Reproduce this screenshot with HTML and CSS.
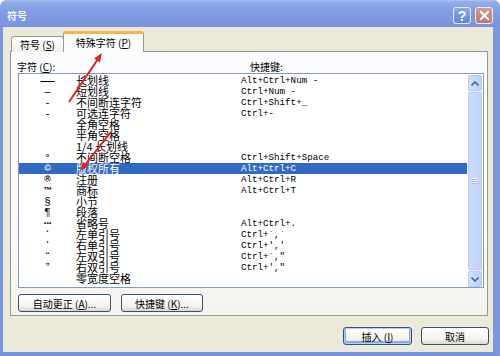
FILE: index.html
```html
<!DOCTYPE html>
<html lang="zh-CN">
<head>
    <meta charset="UTF-8">
    <meta name="viewport" content="width=device-width, initial-scale=1.0">
    <title>符号</title>
    <link rel="stylesheet" href="styles.css">
</head>
<body>
    <div class="window">
        <div class="titlebar">
            <span class="title">符号</span>
            <div class="caption-buttons">
                <span class="cap-btn help">?</span>
                <span class="cap-btn close">
                    <svg width="11" height="11" viewBox="0 0 11 11"><path d="M2 2 L9 9 M9 2 L2 9" stroke="#fff" stroke-width="2" stroke-linecap="square"/></svg>
                </span>
            </div>
        </div>
        <div class="frame">
            <div class="tabs">
                <div class="tab">符号 (<u>S</u>)</div>
                <div class="tab active">特殊字符 (<u>P</u>)</div>
            </div>
            <div class="panel">
                <div class="heads">
                    <span class="head-char">字符 (<u>C</u>):</span>
                    <span>快捷键:</span>
                </div>
                <div class="listbox">
                    <div class="rows">
                        <div class="row"><span class="sym wide">—</span><span class="name">长划线</span><span class="key">Alt+Ctrl+Num -</span></div>
                        <div class="row"><span class="sym">–</span><span class="name">短划线</span><span class="key">Ctrl+Num -</span></div>
                        <div class="row"><span class="sym">-</span><span class="name">不间断连字符</span><span class="key">Ctrl+Shift+_</span></div>
                        <div class="row"><span class="sym">-</span><span class="name">可选连字符</span><span class="key">Ctrl+-</span></div>
                        <div class="row"><span class="sym"></span><span class="name">全角空格</span><span class="key"></span></div>
                        <div class="row"><span class="sym"></span><span class="name">半角空格</span><span class="key"></span></div>
                        <div class="row"><span class="sym"></span><span class="name">1/4 长划线</span><span class="key"></span></div>
                        <div class="row"><span class="sym small">°</span><span class="name">不间断空格</span><span class="key">Ctrl+Shift+Space</span></div>
                        <div class="row selected"><span class="sym small">©</span><span class="name">版权所有</span><span class="key">Alt+Ctrl+C</span></div>
                        <div class="row"><span class="sym small">®</span><span class="name">注册</span><span class="key">Alt+Ctrl+R</span></div>
                        <div class="row"><span class="sym small">™</span><span class="name">商标</span><span class="key">Alt+Ctrl+T</span></div>
                        <div class="row"><span class="sym">§</span><span class="name">小节</span><span class="key"></span></div>
                        <div class="row"><span class="sym">¶</span><span class="name">段落</span><span class="key"></span></div>
                        <div class="row"><span class="sym dots">···</span><span class="name">省略号</span><span class="key">Alt+Ctrl+.</span></div>
                        <div class="row"><span class="sym">‘</span><span class="name">左单引号</span><span class="key">Ctrl+`,`</span></div>
                        <div class="row"><span class="sym">’</span><span class="name">右单引号</span><span class="key">Ctrl+','</span></div>
                        <div class="row"><span class="sym">“</span><span class="name">左双引号</span><span class="key">Ctrl+`,"</span></div>
                        <div class="row"><span class="sym">”</span><span class="name">右双引号</span><span class="key">Ctrl+',"</span></div>
                        <div class="row"><span class="sym"></span><span class="name">零宽度空格</span><span class="key"></span></div>
                    </div>
                    <div class="scrollbar">
                        <div class="sb-btn">
                            <svg width="8" height="5" viewBox="0 0 8 5"><path d="M0.5 4.5 L4 1 L7.5 4.5" fill="none" stroke="#4d6185" stroke-width="1.6"/></svg>
                        </div>
                        <div class="sb-thumb"><span class="grip"></span></div>
                        <div class="sb-btn">
                            <svg width="8" height="5" viewBox="0 0 8 5"><path d="M0.5 0.5 L4 4 L7.5 0.5" fill="none" stroke="#4d6185" stroke-width="1.6"/></svg>
                        </div>
                    </div>
                </div>
                <div class="panel-buttons">
                    <button class="btn btn-auto">自动更正 (<u>A</u>)...</button>
                    <button class="btn btn-keys">快捷键 (<u>K</u>)...</button>
                </div>
            </div>
            <div class="dialog-buttons">
                <button class="btn btn-default">插入 (<u>I</u>)</button>
                <button class="btn btn-cancel">取消</button>
            </div>
        </div>

        <!-- red annotation arrows -->
        <svg class="marks" width="500" height="356" viewBox="0 0 500 356">
            <line x1="69" y1="102" x2="98" y2="59" stroke="#e4201b" stroke-width="2"/>
            <polygon points="102,53 99.9,62.5 94.1,58.5" fill="#e4201b"/>
            <line x1="111" y1="132" x2="84" y2="166" stroke="#e4201b" stroke-width="2"/>
            <polygon points="80,171 88.3,166.2 82.9,161.8" fill="#e4201b"/>
        </svg>
    </div>
</body>
</html>
```

FILE: styles.css
```css
body {
    margin: 0;
    width: 500px;
    height: 356px;
    overflow: hidden;
    font-family: "Noto Sans CJK SC", "Liberation Sans", sans-serif;
    font-size: 10px;
    color: #000;
}
.window {
    position: relative;
    width: 500px;
    height: 356px;
    display: flex;
    flex-direction: column;
    background-color: #7a96df;
    border-radius: 7px 7px 0 0;
    overflow: hidden;
}
.titlebar {
    height: 27px;
    box-sizing: border-box;
    padding: 7px 7px 0 7px;
    display: flex;
    justify-content: space-between;
    align-items: flex-start;
    background: linear-gradient(to bottom, #aec2f1 0, #93ade9 2px, #7f9be1 45%, #7994dd 100%);
}
.title {
    color: #f4f7fe;
    font-weight: bold;
    font-size: 10px;
    line-height: 17px;
}
.caption-buttons {
    display: flex;
    gap: 4px;
}
.cap-btn {
    width: 18px;
    height: 17px;
    box-sizing: border-box;
    border: 1px solid #e6ecfb;
    border-radius: 3px;
    display: flex;
    align-items: center;
    justify-content: center;
}
.help {
    background: linear-gradient(to bottom, #8aa6ec, #6487e0);
    color: #fff;
    font-family: "Liberation Sans", sans-serif;
    font-weight: bold;
    font-size: 14px;
}
.close {
    background: linear-gradient(to bottom, #d39a8e, #c07a6d);
}
.frame {
    flex: 1;
    background-color: #ece9d8;
    border-left: 3px solid #7a96df;
    border-right: 7px solid #7a96df;
    border-bottom: 4px solid #7391dc;
    padding: 5px 0 0 7px;
}
.tabs {
    height: 20px;
    display: flex;
    align-items: flex-end;
    padding-left: 1px;
    margin-bottom: -1px;
}
.tab {
    position: relative;
    height: 16px;
    width: 53px;
    box-sizing: border-box;
    border: 1px solid #919b9c;
    border-bottom: none;
    border-radius: 3px 3px 0 0;
    background: linear-gradient(to bottom, #ffffff, #f1f0ea);
    text-align: center;
    line-height: 15px;
}
.tab.active {
    z-index: 1;
    height: 21px;
    width: 81px;
    margin-left: -1px;
    border-top: 3px solid #f7b54a;
    background: #fcfcfe;
    line-height: 17px;
}
.panel {
    width: 478px;
    height: 265px;
    box-sizing: border-box;
    border: 1px solid #919b9c;
    background: linear-gradient(to bottom, #fcfcfe 60%, #f4f3ee);
    padding-top: 9px;
}
.heads {
    display: flex;
    height: 12px;
    line-height: 12px;
    padding-left: 6px;
}
.head-char {
    width: 233px;
}
.listbox {
    margin-left: 7px;
    width: 466px;
    height: 215px;
    box-sizing: border-box;
    border: 1px solid #7f9db9;
    background: #fff;
    display: flex;
}
.rows {
    flex: 1;
    padding-top: 1px;
}
.row {
    display: flex;
    height: 11px;
    line-height: 11px;
    font-size: 11px;
    white-space: nowrap;
}
.row.selected {
    background-color: #316ac5;
    color: #fff;
}
.sym {
    width: 57px;
    flex: none;
    text-align: center;
    font-family: "Liberation Sans", sans-serif;
    font-size: 11px;
}
.sym.wide {
    font-size: 14px;
}
.sym.small {
    font-size: 9px;
    font-weight: bold;
}
.sym.dots {
    font-weight: bold;
    letter-spacing: -1px;
}
.name {
    width: 165px;
    flex: none;
}
.key {
    font-family: "Liberation Mono", monospace;
    font-size: 9.2px;
}
.scrollbar {
    width: 14px;
    margin: 1px 1px 0 1px;
    display: flex;
    flex-direction: column;
    background: #eef2fc;
}
.sb-btn {
    height: 16px;
    box-sizing: border-box;
    border: 1px solid #b8cbf6;
    border-radius: 2px;
    background: linear-gradient(to right, #d3e0fd, #bcd0fb);
    display: flex;
    align-items: center;
    justify-content: center;
}
.sb-thumb {
    flex: 1;
    margin: 1px 0;
    box-sizing: border-box;
    border: 1px solid #b8cbf6;
    border-radius: 2px;
    background: linear-gradient(to right, #cddbfc, #c0d2fb);
    display: flex;
    align-items: center;
    justify-content: center;
}
.grip {
    width: 6px;
    height: 6px;
    background: repeating-linear-gradient(to bottom, #eef3fe 0, #eef3fe 1px, #a9bde8 1px, #a9bde8 2px);
}
.panel-buttons {
    display: flex;
    gap: 10px;
    margin: 6px 0 0 7px;
}
.btn {
    height: 18px;
    box-sizing: border-box;
    padding: 0;
    border: 1px solid #32507a;
    border-radius: 3px;
    background: linear-gradient(to bottom, #ffffff, #f3f2ec 70%, #dcd8cc);
    font-family: "Noto Sans CJK SC", "Liberation Sans", sans-serif;
    font-size: 10px;
    line-height: 15px;
    color: #000;
}
.btn-auto {
    width: 93px;
}
.btn-keys {
    width: 82px;
}
.dialog-buttons {
    display: flex;
    justify-content: flex-end;
    gap: 9px;
    margin-top: 11px;
    padding-right: 4px;
}
.btn-default {
    width: 69px;
    box-shadow: inset 0 0 0 1px #b5cdf4, inset 0 -1px 0 2px #8aaceb;
}
.btn-cancel {
    width: 68px;
}
.marks {
    position: absolute;
    left: 0;
    top: 0;
    pointer-events: none;
}
```
